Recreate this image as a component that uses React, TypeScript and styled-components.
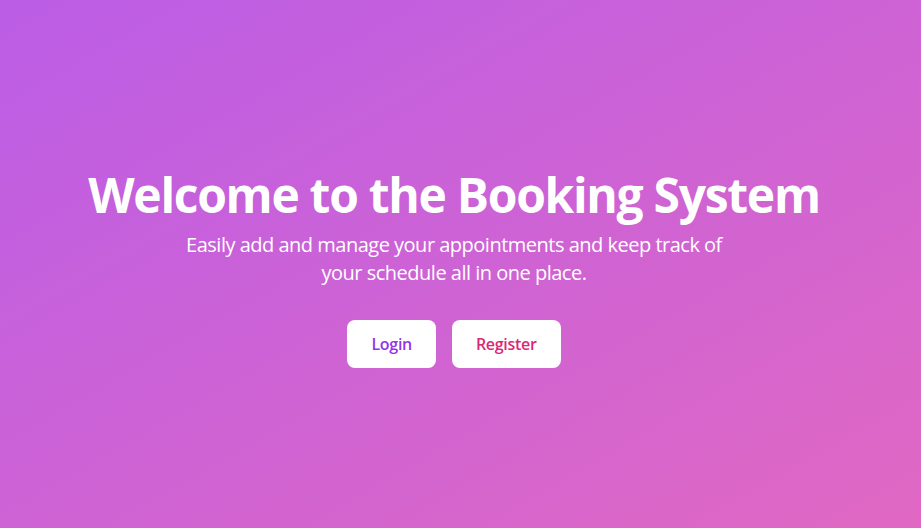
import React from 'react'
import styled, { createGlobalStyle } from 'styled-components'

const GlobalStyle = createGlobalStyle`
  html, body {
    margin: 0;
    padding: 0;
  }
  body {
    font-family: 'Open Sans', 'Noto Sans', sans-serif;
  }
`

const Page = styled.main`
  min-height: 100vh;
  display: flex;
  align-items: center;
  justify-content: center;
  background: linear-gradient(to bottom right, #bb5de6, #e068c3);
  color: #ffffff;
  box-sizing: border-box;
  padding: 6px 13px 0 0;
`

const Hero = styled.section`
  display: flex;
  flex-direction: column;
  align-items: center;
  text-align: center;
`

const Title = styled.h1`
  margin: 0 0 8px;
  font-size: 48px;
  font-weight: 700;
  line-height: 56px;
  letter-spacing: -1.3px;
`

const Subtitle = styled.p`
  margin: 0 0 33px;
  max-width: 550px;
  font-size: 20px;
  line-height: 28px;
  letter-spacing: -0.5px;
`

const Actions = styled.div`
  display: flex;
  gap: 16px;
`

const ActionButton = styled.button<{ $tone: string }>`
  height: 48px;
  padding: 0 24px;
  border: none;
  border-radius: 8px;
  background: #ffffff;
  color: ${(p) => p.$tone};
  font-family: inherit;
  font-size: 16px;
  font-weight: 600;
  letter-spacing: -0.3px;
  cursor: pointer;
`

const App: React.FC = () => {
  return (
    <>
      <GlobalStyle />
      <Page>
        <Hero>
          <Title>Welcome to the Booking System</Title>
          <Subtitle>
            Easily add and manage your appointments and keep track of your schedule all in one place.
          </Subtitle>
          <Actions>
            <ActionButton $tone='#9333ea'>Login</ActionButton>
            <ActionButton $tone='#db2777'>Register</ActionButton>
          </Actions>
        </Hero>
      </Page>
    </>
  )
}

export default App
